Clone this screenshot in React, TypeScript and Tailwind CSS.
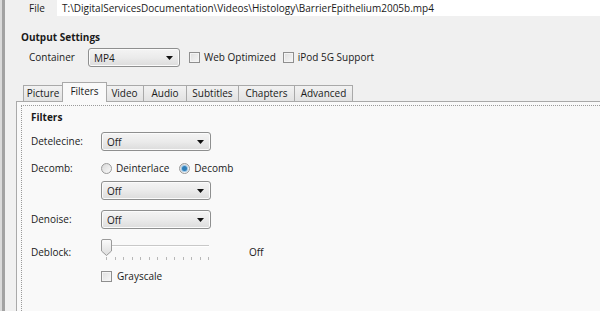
import type { ReactNode } from "react";

const font = "font-['Open_Sans','Noto_Sans',sans-serif]";

function Select({ value, width = "w-[110px]" }: { value: string; width?: string }) {
  return (
    <div
      className={`${width} h-[19px] flex items-center justify-between rounded-[3px] border border-[#8e8f8f] bg-gradient-to-b from-[#f4f4f4] via-[#ebebeb] to-[#dcdcdc] pl-[5px] pr-[6px] shadow-[inset_0_0_0_1px_#fbfbfb]`}
    >
      <span className="leading-none">{value}</span>
      <svg width="7" height="4" viewBox="0 0 7 4">
        <path d="M0 0 H7 L3.5 4 Z" fill="#111" />
      </svg>
    </div>
  );
}

function Checkbox() {
  return (
    <div className="w-[11px] h-[11px] border border-[#8f8f8f] bg-gradient-to-br from-[#dedede] to-[#f7f7f7] shadow-[inset_0_0_0_1px_#f4f4f4]" />
  );
}

function Radio({ checked }: { checked?: boolean }) {
  return (
    <div className="w-[11px] h-[11px] rounded-full border border-[#999] bg-gradient-to-br from-[#d8d8d8] to-[#fafafa] flex items-center justify-center">
      {checked && <div className="w-[5px] h-[5px] rounded-full bg-[#2f7eb8] shadow-[0_0_0_1px_#9cc6e6]" />}
    </div>
  );
}

function Tab({ children, active, width }: { children: ReactNode; active?: boolean; width: string }) {
  if (active) {
    return (
      <div
        className={`${width} h-[20px] relative z-10 -mb-px -mx-px flex items-center justify-center border border-b-0 border-[#a9a9a9] bg-[#f9f9f9] pb-[2px]`}
      >
        {children}
      </div>
    );
  }
  return (
    <div
      className={`${width} h-[16px] flex items-center justify-center border border-b-0 border-l-0 first:border-l border-[#a9a9a9] bg-gradient-to-b from-[#f2f2f2] to-[#e2e2e2]`}
    >
      {children}
    </div>
  );
}

function Row({ label, children, className = "" }: { label: string; children: ReactNode; className?: string }) {
  return (
    <div className={`flex items-center ${className}`}>
      <div className="w-[70px]">{label}</div>
      {children}
    </div>
  );
}

export default function App() {
  const ticks = Array.from({ length: 13 }, (_, i) => i);
  return (
    <div className={`${font} w-[600px] h-[311px] overflow-hidden flex bg-[#f0f0f0] text-[10px] text-[#1a1a1a]`}>
      <div className="w-[2px] bg-[#dadada]" />
      <div className="w-[3px] bg-[#a2a2a2]" />
      <div className="flex-1 flex flex-col min-w-0">
        {/* source file */}
        <div className="h-[16px] flex items-center">
          <div className="w-[52px] pl-[24px]">File</div>
          <div className="flex-1 h-full bg-white flex items-center pl-[5px] whitespace-nowrap">
            T:\DigitalServicesDocumentation\Videos\Histology\BarrierEpithelium2005b.mp4
          </div>
        </div>

        <div className="mt-[14px] h-[14px] flex items-center pl-[16px] font-bold">Output Settings</div>

        <div className="mt-[4px] h-[19px] flex items-center pl-[24px]">
          <div className="w-[59px]">Container</div>
          <Select value="MP4" width="w-[92px]" />
          <div className="ml-[9px] flex items-center gap-[4px]">
            <Checkbox />
            <span>Web Optimized</span>
          </div>
          <div className="ml-[7px] flex items-center gap-[4px]">
            <Checkbox />
            <span>iPod 5G Support</span>
          </div>
        </div>

        {/* tabs */}
        <div className="mt-[14px] flex flex-col flex-1">
          <div className="h-[20px] flex items-end pl-[18px]">
            <Tab width="w-[40px]">Picture</Tab>
            <Tab active width="w-[45px]">Filters</Tab>
            <Tab width="w-[38px]">Video</Tab>
            <Tab width="w-[43px]">Audio</Tab>
            <Tab width="w-[52px]">Subtitles</Tab>
            <Tab width="w-[56px]">Chapters</Tab>
            <Tab width="w-[58px]">Advanced</Tab>
          </div>
          <div className="ml-[11px] flex-1 border-t border-l border-[#a9a9a9] bg-[#f9f9f9] pt-[3px] pl-[4px] flex">
            <div className="flex-1 border-t border-l border-dotted border-[#9a9a9a] pl-[9px] flex flex-col">
              <div className="mt-[4px] h-[14px] flex items-center font-bold">Filters</div>

              <Row label="Detelecine:" className="mt-[8px]">
                <Select value="Off" />
              </Row>

              <Row label="Decomb:" className="mt-[10px] h-[14px]">
                <div className="flex items-center gap-[4px]">
                  <Radio />
                  <span>Deinterlace</span>
                </div>
                <div className="ml-[10px] flex items-center gap-[4px]">
                  <Radio checked />
                  <span>Decomb</span>
                </div>
              </Row>

              <div className="mt-[6px] pl-[70px]">
                <Select value="Off" />
              </div>

              <Row label="Denoise:" className="mt-[10px]">
                <Select value="Off" />
              </Row>

              <div className="mt-[10px] flex items-start">
                <div className="w-[70px] mt-[6px]">Deblock:</div>
                <div className="relative w-[108px] h-[22px]">
                  <div className="absolute left-[2px] right-0 top-[6px] h-[2px] border-t border-[#c8c8c8] border-b border-b-white" />
                  <svg className="absolute left-0 top-0" width="11" height="17" viewBox="0 0 11 17">
                    <defs>
                      <linearGradient id="th" x1="0" x2="0" y1="0" y2="1">
                        <stop offset="0" stopColor="#fbfbfb" />
                        <stop offset="1" stopColor="#dcdcdc" />
                      </linearGradient>
                    </defs>
                    <path d="M2 0.5 H9 Q10.5 0.5 10.5 2 V12 L5.5 16.5 L0.5 12 V2 Q0.5 0.5 2 0.5 Z" fill="url(#th)" stroke="#9a9a9a" />
                  </svg>
                  <div className="absolute left-[5px] right-0 top-[18px] flex justify-between">
                    {ticks.map((t) => (
                      <div key={t} className="w-px h-[3px] bg-[#b8b8b8]" />
                    ))}
                  </div>
                </div>
                <div className="ml-[40px] mt-[6px]">Off</div>
              </div>

              <div className="mt-[8px] pl-[70px] flex items-center gap-[5px]">
                <Checkbox />
                <span>Grayscale</span>
              </div>
            </div>
          </div>
        </div>
      </div>
    </div>
  );
}
